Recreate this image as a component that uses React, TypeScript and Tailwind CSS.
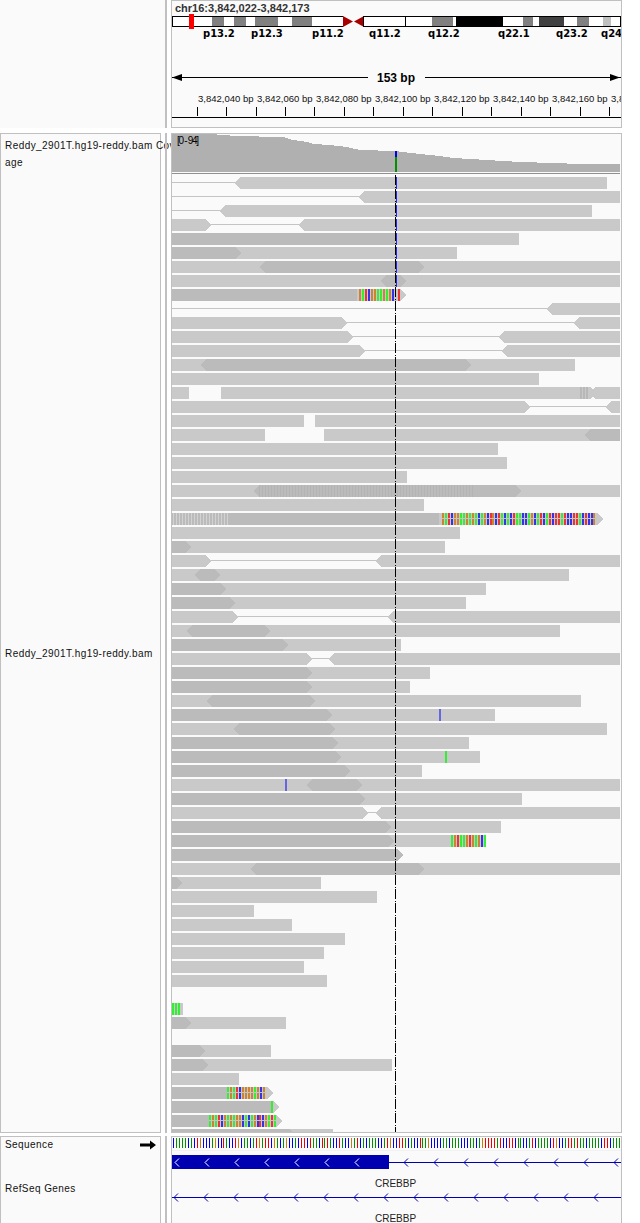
import React from 'react';

// [start, end, tip, dark] tip: 1 right, -1 left, 2 both, 0 flat
type Read = [number, number, number?, number?];

const ROW_TOP = 177;
const ROW_PITCH = 14;
const LIGHT = '#c9c9c9';
const DARK = '#bbbbbb';

const reads: Read[][] = [
  [[235, 607, -1]],
  [[359, 620, -1]],
  [[220, 592, -1]],
  [[172, 211, 1], [299, 620, -1]],
  [[172, 519], [172, 395, 0, 1]],
  [[172, 457], [172, 241, 1, 1]],
  [[172, 620], [260, 424, 2, 1]],
  [[172, 620], [381, 406, 2, 1]],
  [[172, 406, 1], [172, 357, 0, 1]],
  [[547, 620, -1]],
  [[172, 347, 1], [574, 620, -1]],
  [[172, 353, 1], [499, 620, -1]],
  [[172, 365, 1], [502, 620, -1]],
  [[172, 575], [201, 471, 2, 1]],
  [[172, 539]],
  [[172, 189], [221, 596, 1], [590, 620, -1]],
  [[172, 530, 1], [606, 620, -1]],
  [[172, 304], [315, 620]],
  [[172, 265], [324, 620], [585, 620, -1, 1]],
  [[172, 498]],
  [[172, 507]],
  [[172, 407]],
  [[172, 620], [254, 521, 2, 1]],
  [[172, 424]],
  [[172, 603, 1], [172, 439, 0, 1]],
  [[172, 460]],
  [[172, 445], [172, 191, 1, 1]],
  [[172, 211, 1], [376, 620, -1]],
  [[172, 569], [195, 220, 2, 1]],
  [[172, 486], [172, 226, 1, 1]],
  [[172, 466], [172, 235, 1, 1]],
  [[172, 238, 1], [388, 620, -1]],
  [[172, 560], [187, 270, 2, 1]],
  [[172, 401], [172, 288, 1, 1]],
  [[172, 312, 1], [329, 620, -1]],
  [[172, 430], [172, 312, 1, 1]],
  [[172, 410], [172, 312, 1, 1]],
  [[172, 581], [207, 315, 2, 1]],
  [[172, 495], [172, 332, 1, 1]],
  [[172, 607], [234, 335, 2, 1]],
  [[172, 469], [172, 338, 1, 1]],
  [[172, 480], [172, 341, 1, 1]],
  [[172, 422], [172, 350, 1, 1]],
  [[172, 620], [307, 362, 2, 1]],
  [[172, 522], [172, 365, 1, 1]],
  [[172, 368, 1], [376, 620, -1]],
  [[172, 501], [172, 391, 1, 1]],
  [[172, 486], [172, 394, 1, 1]],
  [[172, 403, 1, 1]],
  [[172, 620], [251, 424, 2, 1]],
  [[172, 321], [172, 182, 1, 1]],
  [[172, 377]],
  [[172, 254]],
  [[172, 292]],
  [[172, 345]],
  [[172, 324]],
  [[172, 304]],
  [[172, 327]],
  [],
  [[172, 183]],
  [[172, 286], [172, 191, 1, 1]],
  [],
  [[172, 271], [172, 205, 1, 1]],
  [[172, 392], [172, 208, 1, 1]],
  [[172, 239]],
  [[172, 273, 1], [172, 227, 0, 1]],
  [[172, 279, 1], [172, 271, 0, 1]],
  [[172, 282, 1], [172, 209, 0, 1]],
  [[172, 333], [172, 295, 1, 1]],
];

// row, from, to: the thin line joining two mates
const links: number[][] = [
  [0, 172, 238], [1, 172, 362], [2, 172, 223], [3, 207, 303], [9, 172, 550], [10, 343, 577],
  [11, 349, 503], [12, 361, 506], [16, 526, 609], [27, 207, 380], [31, 232, 392], [34, 308, 333], [45, 362, 380],
];

// row, first x, bases: o g r b, x is grey
const mismatches: [number, number, string][] = [
  [8, 359, 'ogrbooggogobxr'],
  [24, 442, 'ogrbooggogogbgobrobrgbgbrggbbgobgrbgrbrrgrbbrrgbrbbo'],
  [38, 439, 'B'],
  [41, 445, 'g'],
  [43, 285, 'B'],
  [47, 451, 'gorggorogobg'],
  [59, 172, 'ggg'],
  [65, 227, 'gogrboooogobo'],
  [66, 271, 'g'],
  [67, 209, 'gogrbogogoobgbgobrbogrg'],
];

const baseColor: Record<string, string> = { o: '#cc8433', g: '#33ee33', r: '#ee3333', b: '#3333ee', B: '#6666e0' };
const seqColor: Record<string, string> = { o: '#c88000', g: '#009000', r: '#f00000', b: '#0000f0' };
const seq =
  'bggggbgbrobbbgobbrgbbrobggbgrogrrbogbgobbgbrrbrggbrgrgbbrgbbogrbgbgggbbgrobbrrgbgbbrgg' +
  'obbbbggbgggbbbggbgorrrrgrbbrrbggbbgrbggggbrobbgrrgrggbggggbrrbggg';

const bands: [number, number, string][] = [
  [212, 224, '#808080'], [234, 246, '#808080'], [255, 278, '#808080'], [292, 312, '#808080'],
  [432, 453, '#808080'], [456, 503, '#000000'], [523, 533, '#808080'], [539, 564, '#404040'],
  [577, 589, '#808080'], [603, 611, '#c0c0c0'],
];
const bandLabels: [number, string][] = [
  [203, 'p13.2'], [251, 'p12.3'], [312, 'p11.2'], [369, 'q11.2'], [428, 'q12.2'], [498, 'q22.1'], [556, 'q23.2'], [601, 'q24'],
];

const rulerTicks = [197, 226, 256, 285, 314, 344, 373, 403, 432, 462, 491, 521, 550, 580, 609];
const rulerLabels = [198, 257, 316, 375, 434, 493, 552, 611];
const rulerNames = ['3,842,040', '3,842,060', '3,842,080', '3,842,100', '3,842,120', '3,842,140', '3,842,160', '3,842,180'];

const coverage =
  '172,134 206,134 227,135 233,136 283,137 293,140 307,142 313,144 330,145 347,147 360,150 395,151 420,154 440,156 453,158 487,160 520,162 553,163 580,164 620,164 620,172 172,172';

function readPoints(a: number, b: number, tip: number, y: number) {
  const left = tip === -1 || tip === 2;
  const right = tip === 1 || tip === 2;
  const pts: number[][] = [];
  pts.push([left ? a + 5 : a, y]);
  pts.push([right ? b - 5 : b, y]);
  if (right) pts.push([b, y + 6]);
  pts.push([right ? b - 5 : b, y + 12]);
  pts.push([left ? a + 5 : a, y + 12]);
  if (left) pts.push([a, y + 6]);
  return pts.map((p) => p.join(',')).join(' ');
}

function Chevron({ x, y, color }: { x: number; y: number; color: string }) {
  return <path d={`M${x + 4} ${y - 4} L${x} ${y} L${x + 4} ${y + 4}`} fill="none" stroke={color} />;
}

const HeaderTrack = () => (
  <svg width={449} height={126} viewBox="172 1 449 126" className="block font-['Liberation_Sans',sans-serif] tracking-normal">
    <text x={175} y={12} className="fill-[#333333] text-[11px] font-bold">chr16:3,842,022-3,842,173</text>

    <rect x={172.5} y={16.5} width={448} height={10} fill="#ffffff" stroke="#000000" />
    {bands.map(([a, b, c]) => (
      <rect key={a} x={a} y={17} width={b - a} height={9} fill={c} shapeRendering="crispEdges" />
    ))}
    <rect x={343} y={15} width={21} height={13} fill="#fafafa" />
    <polygon points="343,16 353,21.5 343,27" fill="#a80000" />
    <polygon points="364,16 354,21.5 364,27" fill="#a80000" />
    <rect x={363} y={16} width={1} height={11} fill="#000000" />
    <rect x={405} y={16} width={1} height={11} fill="#000000" />
    <rect x={189} y={14} width={5} height={15} fill="#ff0000" />
    {bandLabels.map(([x, t]) => (
      <text key={t} x={x} y={37} className="fill-black font-['DejaVu_Sans',sans-serif] text-[10px] font-bold">{t}</text>
    ))}

    <rect x={172} y={77} width={196} height={1} fill="#000000" />
    <rect x={425} y={77} width={196} height={1} fill="#000000" />
    <polygon points="172,77.5 182,74 182,81" fill="#000000" />
    <polygon points="620,77.5 610,74 610,81" fill="#000000" />
    <text x={377} y={82} className="fill-black text-[12px] font-bold">153 bp</text>

    {rulerLabels.map((x, i) => (
      <text key={x} x={x} y={102} className="fill-[#111111] text-[9.5px]">{rulerNames[i]} bp</text>
    ))}
    {rulerTicks.map((x) => (
      <rect key={x} x={x} y={107} width={1} height={9} fill="#000000" />
    ))}
    <rect x={172} y={117} width={449} height={1} fill="#000000" />
  </svg>
);

const AlignmentTrack = () => (
  <svg width={449} height={998} viewBox="172 134 449 998" className="block font-['Liberation_Sans',sans-serif]" shapeRendering="crispEdges">
    <polygon points={coverage} fill="#b0b0b0" />
    <rect x={395} y={151} width={2} height={6} fill="#0000e0" />
    <rect x={395} y={157} width={2} height={15} fill="#009000" />
    <text x={177} y={144} className="fill-black text-[10px] tracking-[-1.3px]">[0 - 94]</text>
    <rect x={172} y={173} width={448} height={1} fill="#909090" />

    {links.map(([row, a, b]) => (
      <rect key={row} x={a} y={ROW_TOP + row * ROW_PITCH + 5} width={b - a} height={1} fill="#c4c4c4" />
    ))}
    {reads.map((row, i) =>
      row.map(([a, b, tip = 0, dark = 0], j) => (
        <polygon key={`${i}-${j}`} points={readPoints(a, b, tip, ROW_TOP + i * ROW_PITCH)} fill={dark ? DARK : LIGHT} />
      )),
    )}

    {/* hatching on the low quality stretches */}
    {Array.from({ length: 72 }, (_, i) => (
      <rect key={i} x={259 + i * 3} y={ROW_TOP + 22 * ROW_PITCH} width={1} height={12} fill="#b4b4b4" />
    ))}
    {Array.from({ length: 19 }, (_, i) => (
      <rect key={i} x={173 + i * 3} y={ROW_TOP + 24 * ROW_PITCH} width={1} height={12} fill="#d2d2d2" />
    ))}
    {Array.from({ length: 3 }, (_, i) => (
      <rect key={i} x={580 + i * 3} y={ROW_TOP + 15 * ROW_PITCH} width={2} height={12} fill="#b8b8b8" />
    ))}

    {mismatches.map(([row, x0, bases]) =>
      bases.split('').map((b, i) =>
        b === 'x' ? null : (
          <rect key={`${row}-${i}`} x={Math.round(x0 + i * 2.97)} y={ROW_TOP + row * ROW_PITCH} width={2} height={12} fill={baseColor[b]} />
        ),
      ),
    )}
    {[24, 65, 67].map((row) => (
      <rect key={row} x={row === 24 ? 442 : row === 65 ? 227 : 209} y={ROW_TOP + row * ROW_PITCH + 5} width={row === 24 ? 155 : row === 65 ? 40 : 67} height={1} fill="#c4c4c4" />
    ))}

    {/* snp column */}
    {Array.from({ length: 8 }, (_, i) => (
      <rect key={i} x={396} y={ROW_TOP + i * ROW_PITCH} width={1} height={12} fill="#2828e8" />
    ))}
    <line x1={395.5} y1={175} x2={395.5} y2={1132} stroke="#000000" strokeDasharray="10 2 1 1" />
  </svg>
);

const SequenceTrack = () => (
  <svg width={449} height={86} viewBox="172 1137 449 86" className="block font-['Liberation_Sans',sans-serif] tracking-normal">
    {seq.split('').map((c, i) => (
      <rect key={i} x={Math.round(173 + i * 2.97)} y={1138} width={1} height={10} fill={seqColor[c]} shapeRendering="crispEdges" />
    ))}
    <rect x={172} y={1150} width={449} height={1} fill="#f2f2f2" />

    <rect x={172} y={1155} width={217} height={14} fill="#0000b0" />
    {[175, 205, 235, 265, 295, 325, 355].map((x) => (
      <Chevron key={x} x={x} y={1162.5} color="#ffffff" />
    ))}
    <rect x={389} y={1162} width={232} height={1} fill="#0000b0" />
    {[406, 436, 466, 496, 526, 556, 586, 616].map((x) => (
      <Chevron key={x} x={x - 2} y={1162.5} color="#0000b0" />
    ))}
    <text x={375} y={1187} className="fill-[#222222] text-[10px]">CREBBP</text>

    <rect x={172} y={1197} width={449} height={1} fill="#0000b0" />
    {[175, 205, 235, 265, 295, 325, 355, 385, 415, 445, 475, 505, 535, 565, 595].map((x) => (
      <Chevron key={x} x={x - 1} y={1197.5} color="#0000b0" />
    ))}
    <text x={375} y={1222} className="fill-[#222222] text-[10px]">CREBBP</text>
  </svg>
);

// name column plus the thin sash; clips long names at the track edge
const Side: React.FC<{ children: React.ReactNode; className: string }> = ({ children, className }) => (
  <div className="flex w-[171px] shrink-0 overflow-hidden">
    <div className={`w-[161px] shrink-0 border-[#c0c0c0] bg-[#fafafa] pl-[4px] ${className}`}>{children}</div>
    <div className="ml-[4px] w-[2px] shrink-0 bg-[#c0c0c0]" />
  </div>
);

export default function App() {
  return (
    <div className="h-[1223px] w-[640px] overflow-hidden bg-white font-['Liberation_Sans',sans-serif] text-[10px] leading-[12px] tracking-[0.43px] text-[#111111]">
      <div className="flex h-[128px]">
        <div className="flex w-[171px] shrink-0">
          <div className="w-[165px] shrink-0 bg-[#fafafa]" />
          <div className="w-[2px] shrink-0 bg-[#c0c0c0]" />
        </div>
        <div className="w-[451px] shrink-0 border border-[#c0c0c0] bg-[#fafafa]">
          <HeaderTrack />
        </div>
      </div>

      <div className="mt-[5px] flex h-[1000px]">
        <Side className="border">
          <div className="mt-[6px] whitespace-nowrap">Reddy_2901T.hg19-reddy.bam Coverage</div>
          <div className="mt-[5px]">age</div>
          <div className="mt-[479px] whitespace-nowrap">Reddy_2901T.hg19-reddy.bam</div>
        </Side>
        <div className="w-[451px] shrink-0 border border-[#c0c0c0] bg-[#fafafa]">
          <AlignmentTrack />
        </div>
      </div>

      <div className="mt-[3px] flex h-[87px]">
        <Side className="border border-b-0">
          <div className="mt-[2px] flex items-center justify-between pr-[4px]">
            <span>Sequence</span>
            <svg width={16} height={10} viewBox="0 0 16 10">
              <path d="M0 3.5H10V0.5L16 5L10 9.5V6.5H0Z" fill="#000000" />
            </svg>
          </div>
          <div className="mt-[32px]">RefSeq Genes</div>
        </Side>
        <div className="w-[451px] shrink-0 border border-b-0 border-[#c0c0c0] bg-[#fafafa]">
          <SequenceTrack />
        </div>
      </div>
    </div>
  );
}
